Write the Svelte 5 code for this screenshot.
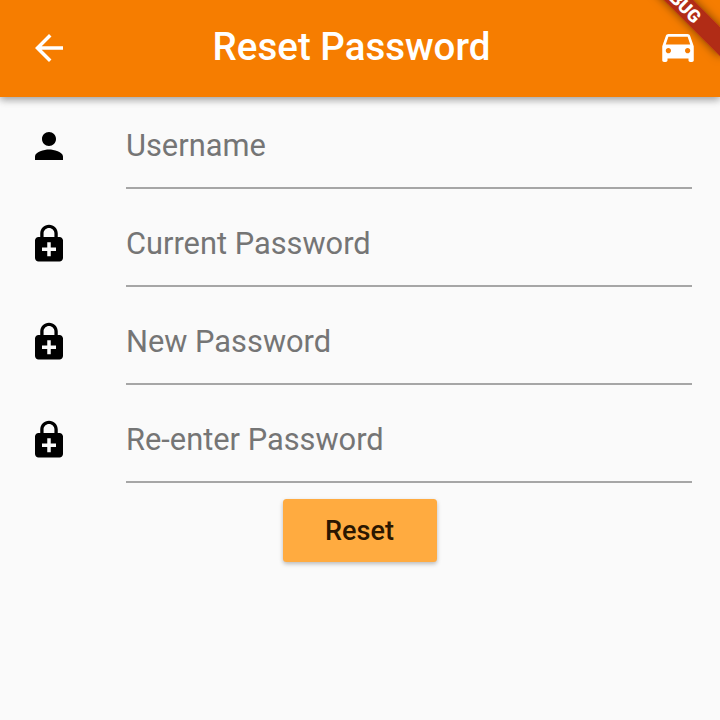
<script>
  const lock = 'M18 8h-1V6c0-2.76-2.24-5-5-5S7 3.24 7 6v2H6c-1.1 0-2 .9-2 2v10c0 1.1.9 2 2 2h12c1.1 0 2-.9 2-2V10c0-1.1-.9-2-2-2zM8.9 6c0-1.71 1.39-3.1 3.1-3.1s3.1 1.39 3.1 3.1v2H8.9V6zM16 16h-3v3h-2v-3H8v-2h3v-3h2v3h3v2z';
  const person = 'M12 12c2.21 0 4-1.79 4-4s-1.79-4-4-4-4 1.79-4 4 1.79 4 4 4zm0 2c-2.67 0-8 1.34-8 4v2h16v-2c0-2.66-5.33-4-8-4z';
  const fields = [
    { label: 'Username', icon: person },
    { label: 'Current Password', icon: lock },
    { label: 'New Password', icon: lock },
    { label: 'Re-enter Password', icon: lock }
  ];
</script>

<div class="screen">
  <header>
    <svg class="icon" viewBox="0 0 24 24"><path d="M20 11H7.83l5.59-5.59L12 4l-8 8 8 8 1.41-1.41L7.83 13H20v-2z" /></svg>
    <h1>Reset Password</h1>
    <svg class="icon" viewBox="0 0 24 24"><path d="M18.92 5.01C18.72 4.42 18.16 4 17.5 4h-11c-.66 0-1.21.42-1.42 1.01L3 11v8c0 .55.45 1 1 1h1c.55 0 1-.45 1-1v-1h12v1c0 .55.45 1 1 1h1c.55 0 1-.45 1-1v-8l-2.08-5.99zM6.5 15c-.83 0-1.5-.67-1.5-1.5S5.67 12 6.5 12s1.5.67 1.5 1.5S7.33 15 6.5 15zm11 0c-.83 0-1.5-.67-1.5-1.5s.67-1.5 1.5-1.5 1.5.67 1.5 1.5-.67 1.5-1.5 1.5zM5 10l1.5-4.5h11L19 10H5z" /></svg>
  </header>

  <main>
    {#each fields as field}
      <div class="row">
        <svg class="icon" viewBox="0 0 24 24"><path d={field.icon} /></svg>
        <div class="field">{field.label}</div>
      </div>
    {/each}
    <button>Reset</button>
  </main>

  <div class="ribbon">DEBUG</div>
</div>

<style>
  :global(body) {
    margin: 0;
  }
  .screen {
    position: relative;
    width: 720px;
    height: 720px;
    overflow: hidden;
    background: #fafafa;
    font-family: Roboto, sans-serif;
  }
  header {
    position: relative;
    display: flex;
    align-items: center;
    justify-content: space-between;
    box-sizing: border-box;
    height: 97px;
    padding: 0 21px 1px 28px;
    background: #f67d00;
    color: #fff;
    box-shadow: 0 3px 7px rgba(0, 0, 0, 0.28), 0 1px 10px rgba(0, 0, 0, 0.14);
  }
  .icon {
    display: block;
    flex: none;
    width: 42px;
    height: 42px;
    fill: currentColor;
  }
  h1 {
    margin: 0 24px 0 0;
    padding-bottom: 2px;
    font-size: 38.5px;
    font-weight: 500;
    line-height: 46px;
    white-space: nowrap;
  }
  main {
    display: flex;
    flex-direction: column;
    align-items: stretch;
  }
  .row {
    display: flex;
    align-items: center;
    box-sizing: border-box;
    height: 98px;
    padding: 0 28px;
    color: #000;
  }
  .field {
    flex: 1;
    box-sizing: border-box;
    height: 86px;
    margin-left: 56px;
    border-bottom: 2px solid #a6a6a6;
    color: #757575;
    font-size: 30.8px;
    line-height: 86px;
  }
  button {
    align-self: center;
    box-sizing: border-box;
    width: 154px;
    height: 63px;
    margin-top: 10px;
    padding: 2px 1px 0 0;
    border: 0;
    border-radius: 3.5px;
    background: #ffab40;
    color: #2b1600;
    box-shadow: 0 2px 4px rgba(0, 0, 0, 0.26);
    font: 500 27px/61px Roboto, sans-serif;
  }
  .ribbon {
    position: absolute;
    top: -11.5px;
    left: 608px;
    width: 140px;
    height: 21px;
    transform: rotate(45deg);
    background: rgba(160, 24, 28, 0.8);
    box-shadow: 0 0 10px rgba(0, 0, 0, 0.5);
    color: #fff;
    font-size: 17.85px;
    font-weight: 900;
    line-height: 21px;
    text-align: center;
  }
</style>
